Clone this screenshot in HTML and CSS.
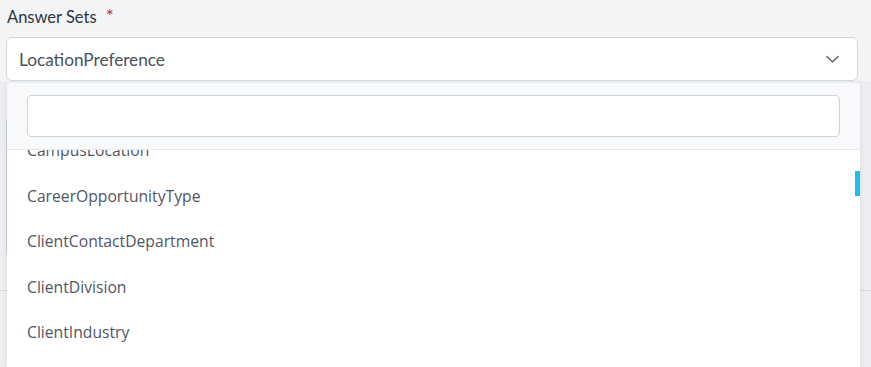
FILE: index.html
```html
<!DOCTYPE html>
<html lang="en">
<head>
  <meta charset="UTF-8">
  <title>Answer Sets</title>
  <link rel="stylesheet" href="styles.css">
</head>
<body>

<div class="field">
  <label class="label">Answer Sets <span class="req">*</span></label>
  <div class="select">
    <span class="select-value">LocationPreference</span>
    <svg class="chevron" viewBox="0 0 16 10"><path d="M1.5 2l6.5 6 6.5-6"/></svg>
  </div>

  <div class="behind">
    <div class="behind-box"></div>
    <div class="behind-rule"></div>
  </div>

  <div class="dropdown">
    <div class="search-wrap">
      <input class="search" type="text">
    </div>
    <div class="options">
      <ul class="option-list">
        <li>CampusLocation</li>
        <li>CareerOpportunityType</li>
        <li>ClientContactDepartment</li>
        <li>ClientDivision</li>
        <li>ClientIndustry</li>
      </ul>
      <div class="thumb"></div>
    </div>
  </div>
</div>

</body>
</html>
```

FILE: styles.css
```css
body {
  margin: 0;
  background: #f3f4f6;
  font-family: Lato, "Open Sans", sans-serif;
  overflow: hidden;
  height: 367px;
}
.field {
  position: relative;
  padding: 4px 13px 0 6px;
}
.label {
  display: block;
  padding-left: 1px;
  font-size: 16.5px;
  line-height: 23px;
  color: #2f3540;
  margin-bottom: 8px;
}
.req {
  color: #c0392b;
  margin-left: 5px;
  font-size: 19px;
}
.select {
  height: 42px;
  background: #fff;
  border: 1px solid #d3d6db;
  border-radius: 6px;
  display: flex;
  align-items: center;
  justify-content: space-between;
  padding: 0 17px 0 12px;
}
.select-value {
  font-size: 17.2px;
  color: #4a505c;
}
.chevron {
  width: 15px;
  height: 10px;
  fill: none;
  stroke: #5f6673;
  stroke-width: 1.6;
}
.behind {
  height: 286px;
  margin-left: -6px;
  margin-right: -13px;
  background: #eceef1;
  padding-top: 39px;
  box-sizing: border-box;
}
.behind-box {
  height: 135px;
  margin-left: 6px;
  border-left: 1px solid #c9ccd1;
}
.behind-rule {
  margin-top: 35px;
  border-top: 1px solid #d6d8dc;
}
.dropdown {
  position: absolute;
  left: 7px;
  top: 83px;
  width: 853px;
  height: 284px;
  background: #fff;
  box-shadow: 0 2px 6px rgba(0,0,0,0.08);
  border-radius: 4px 4px 0 0;
}
.search-wrap {
  background: #f8f9fa;
  padding: 12px 20px 12px 20px;
  border-bottom: 1px solid #e6e8eb;
  border-radius: 4px 4px 0 0;
}
.search {
  display: block;
  box-sizing: border-box;
  width: 100%;
  height: 42px;
  border: 1px solid #cfd3d8;
  border-radius: 4px;
  background: #fff;
  outline: none;
}
.options {
  position: relative;
  height: 217px;
  overflow: hidden;
}
.option-list {
  list-style: none;
  margin: -22px 0 0 0;
  padding: 0;
  font-family: "Open Sans", sans-serif;
  font-size: 15.7px;
  color: #50565f;
}
.option-list li {
  height: 45.5px;
  line-height: 45.5px;
  padding-left: 20px;
}
.thumb {
  position: absolute;
  right: 0;
  top: 21px;
  width: 5px;
  height: 25px;
  background: #1ec0ea;
}
```
